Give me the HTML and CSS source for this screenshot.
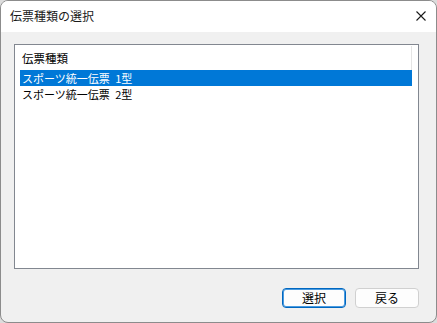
FILE: index.html
```html
<!DOCTYPE html>
<html lang="ja">
<head>
<meta charset="utf-8">
<link rel="stylesheet" href="styles.css">
</head>
<body>
<div class="window">
  <div class="titlebar">
    <span class="title">伝票種類の選択</span>
    <span class="close">
      <svg width="10" height="10" viewBox="0 0 10 10"><path d="M0.5 0.5 L9.5 9.5 M9.5 0.5 L0.5 9.5" stroke="#1a1a1a" stroke-width="1.1" fill="none"/></svg>
    </span>
  </div>
  <div class="content">
    <div class="listview">
      <div class="header">
        <span class="col">伝票種類</span>
      </div>
      <div class="rows">
        <div class="row selected">スポーツ統一伝票 1型</div>
        <div class="row">スポーツ統一伝票 2型</div>
      </div>
    </div>
    <div class="buttons">
      <button class="btn default">選択</button>
      <button class="btn">戻る</button>
    </div>
  </div>
</div>
</body>
</html>
```
FILE: styles.css
```css
html, body {
  margin: 0;
  padding: 0;
  background: #dcdcdc;
}
body {
  width: 437px;
  height: 323px;
  overflow: hidden;
  font-family: "Noto Sans CJK JP", "Noto Sans", sans-serif;
}
.window {
  box-sizing: border-box;
  width: 437px;
  height: 323px;
  border: 1px solid #8c8c8c;
  border-radius: 8px;
  overflow: hidden;
  display: flex;
  flex-direction: column;
  background: #f0f0f0;
}
.titlebar {
  box-sizing: border-box;
  height: 31px;
  flex: none;
  background: #ffffff;
  display: flex;
  align-items: center;
  justify-content: space-between;
  padding: 0 10px 1px 9px;
}
.title {
  font-size: 12px;
  color: #1a1a1a;
  line-height: 14px;
}
.close {
  display: flex;
  width: 10px;
  height: 10px;
}
.content {
  flex: 1;
  display: flex;
  flex-direction: column;
  padding: 12px 17px 0 13px;
}
.listview {
  box-sizing: border-box;
  height: 225px;
  border: 1px solid #828790;
  background: #ffffff;
  padding: 1px 6px 0 5px;
}
.header {
  height: 24px;
  display: flex;
}
.col {
  box-sizing: border-box;
  width: 392px;
  border-right: 1px solid #e5e5e5;
  font-size: 11.5px;
  line-height: 24px;
  padding-left: 2px;
  color: #000;
}
.rows {
  display: flex;
  flex-direction: column;
}
.row {
  height: 16px;
  line-height: 16px;
  font-size: 11px;
  padding-left: 2px;
  word-spacing: 3px;
  color: #000;
  width: 392px;
  box-sizing: border-box;
}
.row.selected {
  background: #0078d7;
  color: #ffffff;
}
.buttons {
  display: flex;
  justify-content: flex-end;
  gap: 9px;
  margin-top: 19px;
}
.btn {
  box-sizing: border-box;
  width: 64px;
  height: 20px;
  border: 1px solid #d0d0d0;
  border-radius: 4px;
  background: #fdfdfd;
  font-family: "Noto Sans CJK JP", sans-serif;
  font-size: 12px;
  line-height: 16px;
  padding: 0;
  color: #000;
}
.btn.default {
  border: 1px solid #0067c0;
  box-shadow: inset 0 0 0 1px #4a9be0;
}
```
